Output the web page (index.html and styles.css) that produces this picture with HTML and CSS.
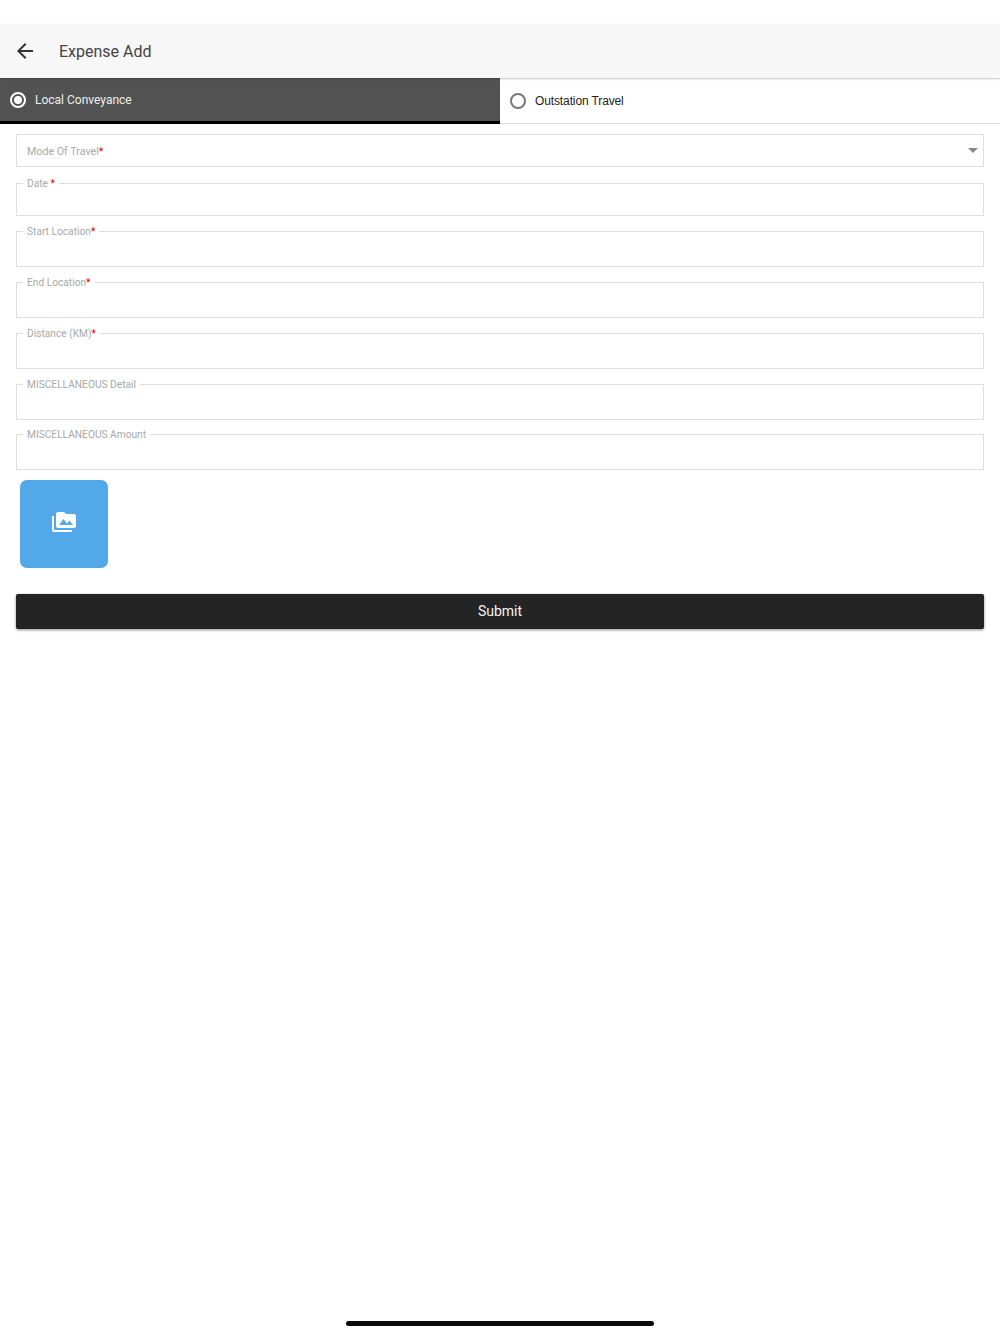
FILE: index.html
```html
<!DOCTYPE html>
<html lang="en">
<head>
  <meta charset="UTF-8" />
  <meta name="viewport" content="width=device-width, initial-scale=1.0" />
  <title>Expense Add</title>
  <link rel="stylesheet" href="styles.css">
</head>
<body>
  <div class="page">
    <header class="toolbar">
      <button class="back-btn" aria-label="Back">
        <svg viewBox="0 0 24 24" width="24" height="24"><path d="M20 11H7.83l5.59-5.59L12 4l-8 8 8 8 1.41-1.41L7.83 13H20v-2z"/></svg>
      </button>
      <h1>Expense Add</h1>
    </header>

    <div class="tabs">
      <div class="tab tab-active"><span class="radio radio-on"></span>Local Conveyance</div>
      <div class="tab"><span class="radio"></span>Outstation Travel</div>
    </div>

    <form class="form" onsubmit="return false">
      <div class="select-field">
        <span>Mode Of Travel<b class="req">*</b></span>
        <span class="caret"></span>
      </div>

      <fieldset class="field field-date"><legend>Date <b class="req">*</b></legend></fieldset>
      <fieldset class="field field-tall"><legend>Start Location<b class="req">*</b></legend></fieldset>
      <fieldset class="field field-tall"><legend>End Location<b class="req">*</b></legend></fieldset>
      <fieldset class="field field-tall"><legend>Distance (KM)<b class="req">*</b></legend></fieldset>
      <fieldset class="field field-tall"><legend>MISCELLANEOUS Detail</legend></fieldset>
      <fieldset class="field field-tall field-last"><legend>MISCELLANEOUS Amount</legend></fieldset>

      <button class="upload" aria-label="Add photos">
        <svg viewBox="0 0 24 24" width="24" height="24"><path d="M2 6H0v5h.01L0 20c0 1.1.9 2 2 2h18v-2H2V6zm20-2h-8l-2-2H6c-1.1 0-1.99.9-1.99 2L4 16c0 1.1.9 2 2 2h16c1.1 0 2-.9 2-2V6c0-1.1-.9-2-2-2zM7 15l4.5-6 3.5 4.51 2.5-3.01L21 15H7z"/></svg>
      </button>

      <button class="submit">Submit</button>
    </form>

    <div class="home-bar"></div>
  </div>
</body>
</html>
```

FILE: styles.css
```css
:root {
  --line: #dedede;
  --label: #a8a8a8;
  --dark: #525252;
}

* {
  box-sizing: border-box;
}

body {
  margin: 0;
  font-family: Roboto, sans-serif;
  background: #fff;
}

.page {
  height: 1334px;
  padding-top: 24px;
  display: flex;
  flex-direction: column;
  overflow: hidden;
}

.toolbar {
  position: relative;
  z-index: 1;
  height: 54px;
  background: #f7f7f7;
  display: flex;
  align-items: center;
  padding-left: 13px;
  flex-shrink: 0;
  box-shadow: 0 1px 2px rgba(0, 0, 0, 0.22);
}

.toolbar h1 {
  margin: 0 0 0 22px;
  font-size: 16px;
  font-weight: 400;
  color: #444;
}

.back-btn {
  width: 24px;
  height: 24px;
  padding: 0;
  border: 0;
  background: none;
  fill: #333;
}

.back-btn svg {
  display: block;
}

.tabs {
  display: flex;
  height: 46px;
  flex-shrink: 0;
}

.tab {
  width: 50%;
  display: flex;
  align-items: center;
  padding-left: 10px;
  font-family: "Liberation Sans", sans-serif;
  font-size: 12px;
  letter-spacing: -0.12px;
  color: #222;
  border-bottom: 1px solid #ddd;
}

.tab .radio {
  margin-right: 9px;
}

.tab-active {
  background: var(--dark);
  color: #eee;
  font-family: Roboto, sans-serif;
  letter-spacing: 0;
  border-bottom: 3px solid #000;
}

.radio {
  width: 16px;
  height: 16px;
  border: 2px solid #777;
  border-radius: 50%;
  flex-shrink: 0;
}

.radio-on {
  border-color: #fff;
  background: #fff;
  padding: 2px;
  background-clip: content-box;
}

.form {
  padding: 10px 16px 0;
  display: flex;
  flex-direction: column;
}

.select-field {
  height: 33px;
  border: 1px solid var(--line);
  display: flex;
  align-items: center;
  justify-content: space-between;
  padding: 2px 5px 0 10px;
  font-size: 10.7px;
  color: var(--label);
}

.caret {
  width: 0;
  height: 0;
  margin-top: -2px;
  border-left: 5px solid transparent;
  border-right: 5px solid transparent;
  border-top: 5px solid #888;
}

.req {
  color: #e00;
  font-weight: 400;
}

.field {
  margin: 9px 0 0;
  padding: 0;
  border: 1px solid var(--line);
  min-width: 0;
}

.field legend {
  height: 14px;
  margin-left: 6px;
  padding: 0 4px;
  font-size: 10.2px;
  line-height: 16px;
  color: var(--label);
}

.field-date {
  height: 40px;
}

.field-tall {
  height: 43px;
  margin-top: 8px;
}

.field-last {
  margin-top: 7px;
}

.upload {
  width: 88px;
  height: 88px;
  margin: 10px 0 0 4px;
  padding: 0 0 4px;
  border: 0;
  border-radius: 7px;
  background: #52a8e8;
  fill: #fff;
  display: flex;
  align-items: center;
  justify-content: center;
}

.submit {
  height: 35px;
  margin-top: 26px;
  padding: 0 0 2px;
  border: 0;
  border-radius: 2px;
  background: #242424;
  color: #f2f2f2;
  font-family: Roboto, sans-serif;
  font-size: 14px;
  box-shadow: 0 1px 3px rgba(0, 0, 0, 0.45);
}

.home-bar {
  width: 308px;
  height: 5px;
  margin: auto auto 8px;
  border-radius: 3px;
  background: #0a0a0a;
  flex-shrink: 0;
}
```
